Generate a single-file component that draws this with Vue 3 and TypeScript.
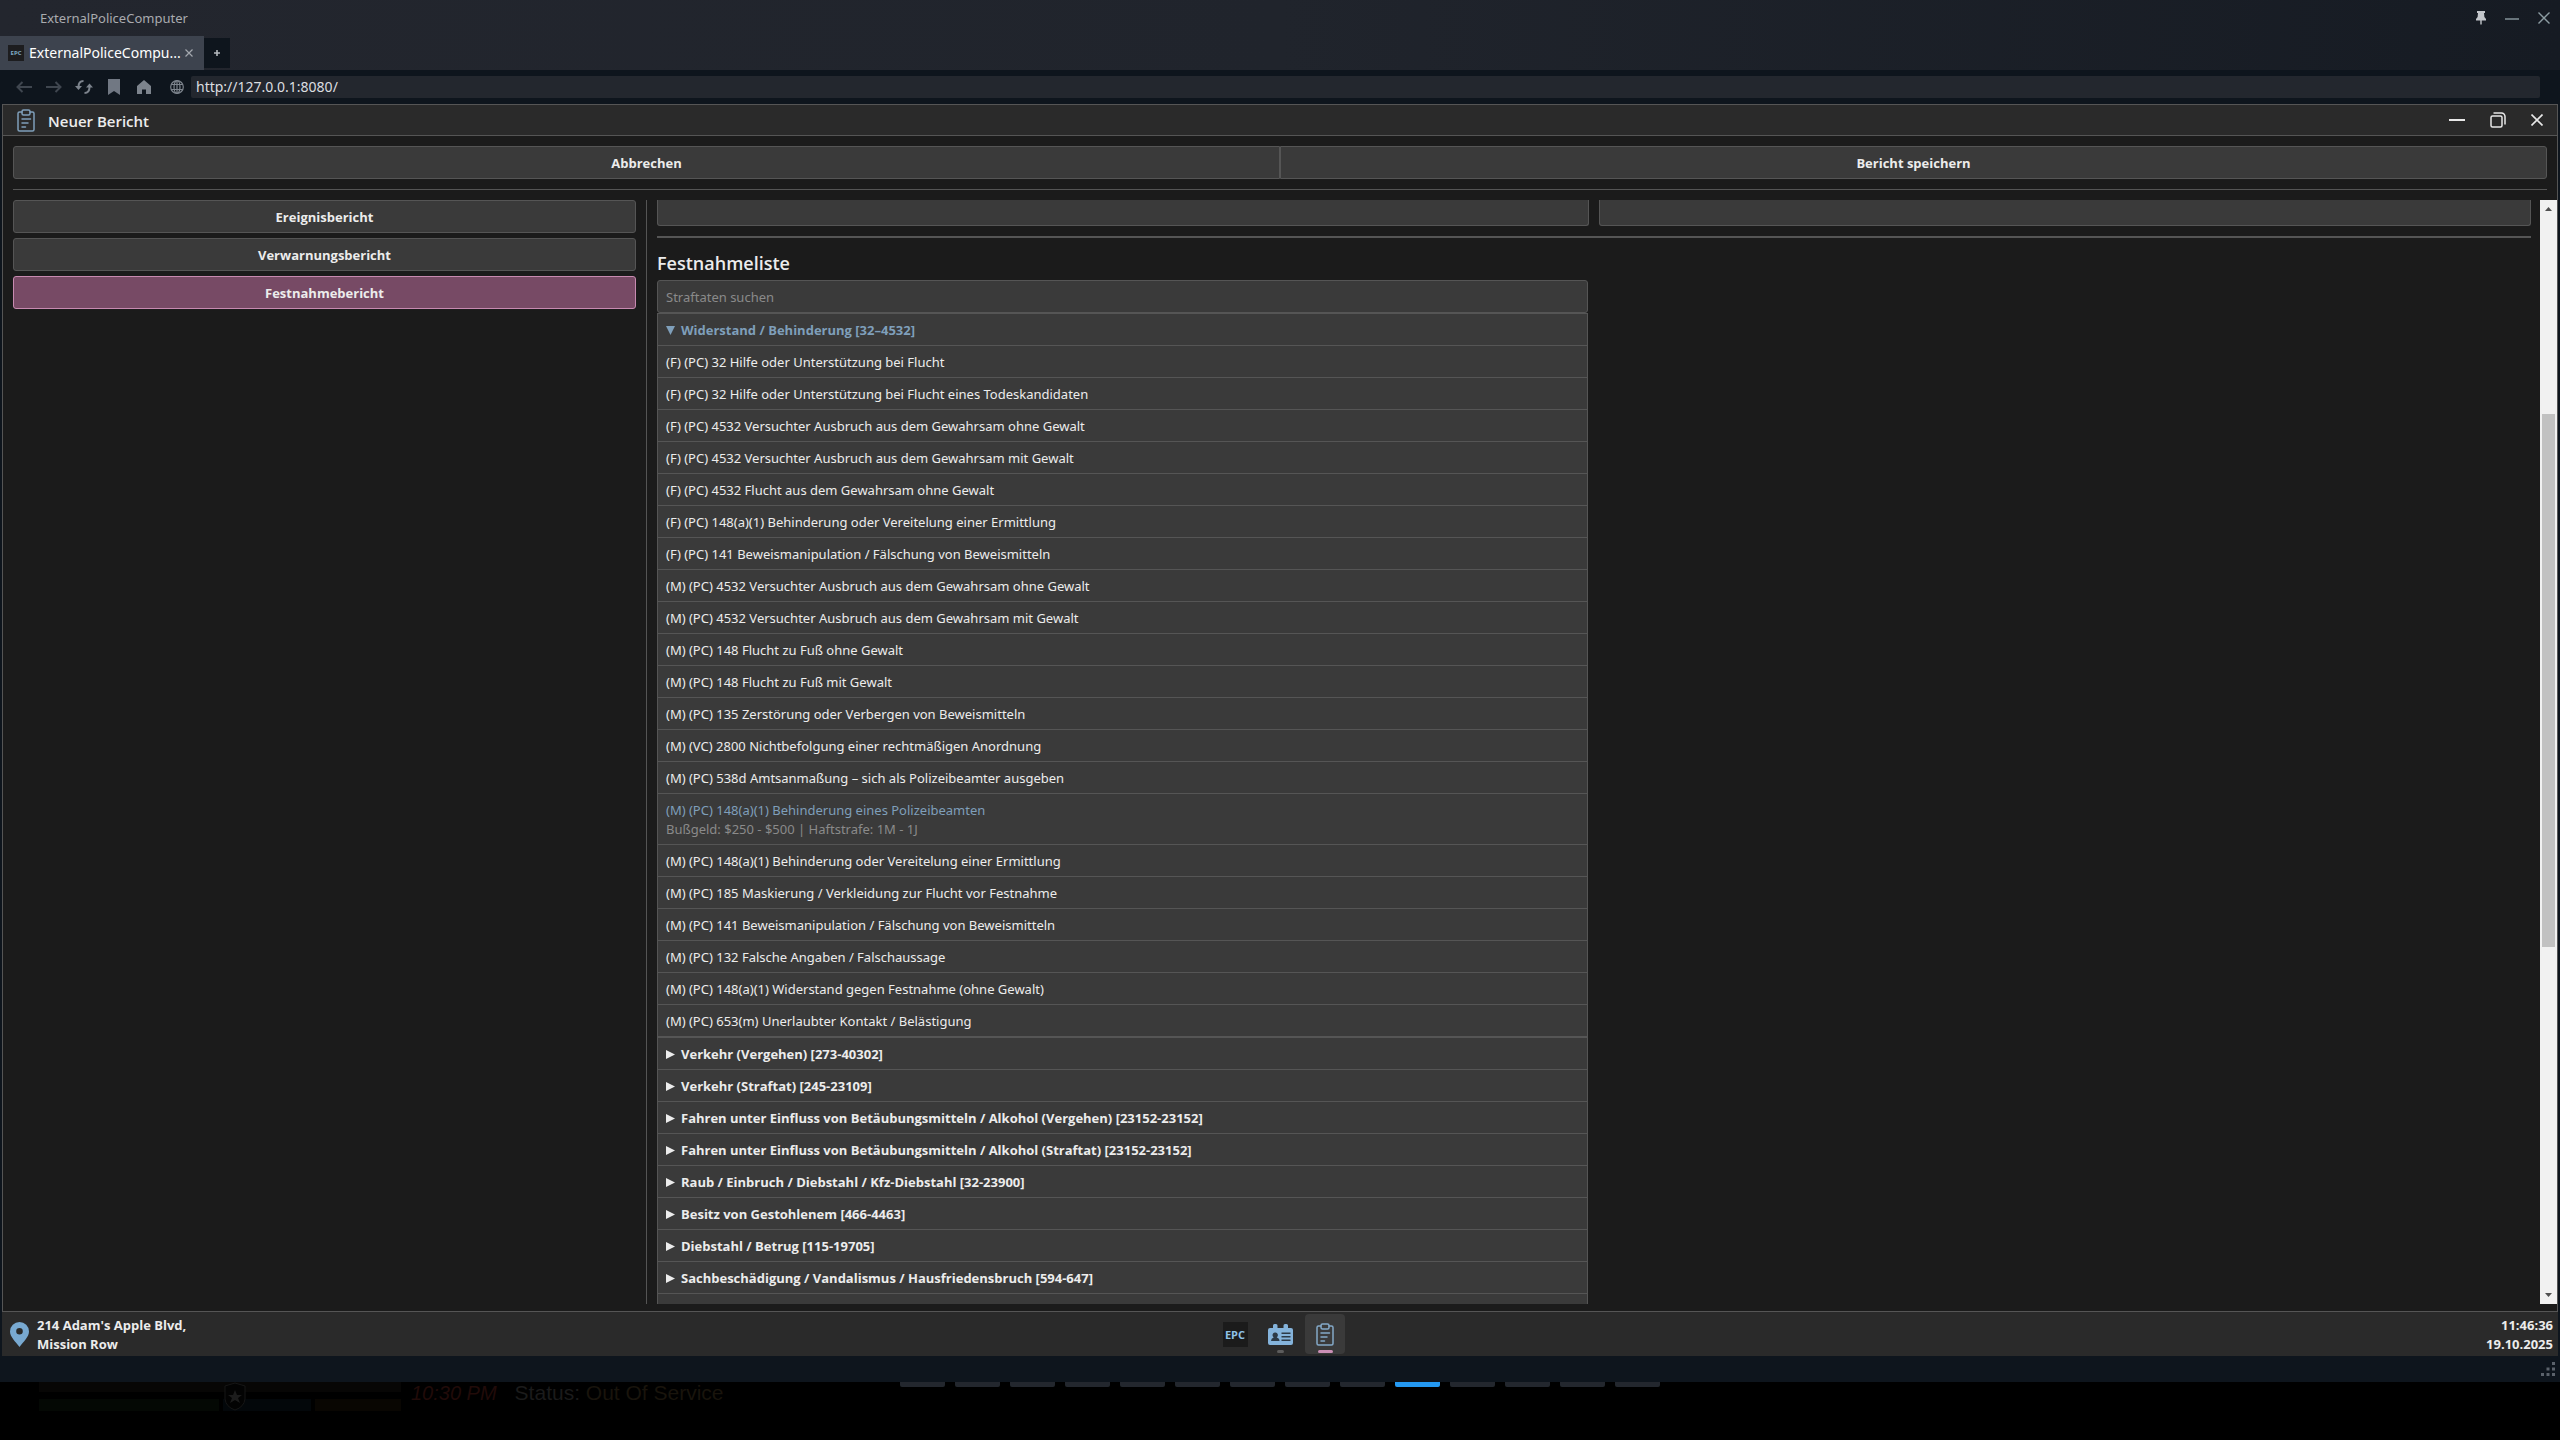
<script setup lang="ts">
import { ref } from 'vue'

interface Charge {
  text: string
  detail?: string
}
interface ChargeGroup {
  name: string
  charges: Charge[]
}

const address = ref('http://127.0.0.1:8080/')
const search = ref('')
const reportTypes = ['Ereignisbericht', 'Verwarnungsbericht', 'Festnahmebericht']
const activeType = ref('Festnahmebericht')

const resisting: Charge[] = [
  { text: '(F) (PC) 32 Hilfe oder Unterstützung bei Flucht' },
  { text: '(F) (PC) 32 Hilfe oder Unterstützung bei Flucht eines Todeskandidaten' },
  { text: '(F) (PC) 4532 Versuchter Ausbruch aus dem Gewahrsam ohne Gewalt' },
  { text: '(F) (PC) 4532 Versuchter Ausbruch aus dem Gewahrsam mit Gewalt' },
  { text: '(F) (PC) 4532 Flucht aus dem Gewahrsam ohne Gewalt' },
  { text: '(F) (PC) 148(a)(1) Behinderung oder Vereitelung einer Ermittlung' },
  { text: '(F) (PC) 141 Beweismanipulation / Fälschung von Beweismitteln' },
  { text: '(M) (PC) 4532 Versuchter Ausbruch aus dem Gewahrsam ohne Gewalt' },
  { text: '(M) (PC) 4532 Versuchter Ausbruch aus dem Gewahrsam mit Gewalt' },
  { text: '(M) (PC) 148 Flucht zu Fuß ohne Gewalt' },
  { text: '(M) (PC) 148 Flucht zu Fuß mit Gewalt' },
  { text: '(M) (PC) 135 Zerstörung oder Verbergen von Beweismitteln' },
  { text: '(M) (VC) 2800 Nichtbefolgung einer rechtmäßigen Anordnung' },
  { text: '(M) (PC) 538d Amtsanmaßung – sich als Polizeibeamter ausgeben' },
  {
    text: '(M) (PC) 148(a)(1) Behinderung eines Polizeibeamten',
    detail: 'Bußgeld: $250 - $500 | Haftstrafe: 1M - 1J',
  },
  { text: '(M) (PC) 148(a)(1) Behinderung oder Vereitelung einer Ermittlung' },
  { text: '(M) (PC) 185 Maskierung / Verkleidung zur Flucht vor Festnahme' },
  { text: '(M) (PC) 141 Beweismanipulation / Fälschung von Beweismitteln' },
  { text: '(M) (PC) 132 Falsche Angaben / Falschaussage' },
  { text: '(M) (PC) 148(a)(1) Widerstand gegen Festnahme (ohne Gewalt)' },
  { text: '(M) (PC) 653(m) Unerlaubter Kontakt / Belästigung' },
]

const groups: ChargeGroup[] = [
  { name: 'Widerstand / Behinderung [32–4532]', charges: resisting },
  { name: 'Verkehr (Vergehen) [273-40302]', charges: [] },
  { name: 'Verkehr (Straftat) [245-23109]', charges: [] },
  { name: 'Fahren unter Einfluss von Betäubungsmitteln / Alkohol (Vergehen) [23152-23152]', charges: [] },
  { name: 'Fahren unter Einfluss von Betäubungsmitteln / Alkohol (Straftat) [23152-23152]', charges: [] },
  { name: 'Raub / Einbruch / Diebstahl / Kfz-Diebstahl [32-23900]', charges: [] },
  { name: 'Besitz von Gestohlenem [466-4463]', charges: [] },
  { name: 'Diebstahl / Betrug [115-19705]', charges: [] },
  { name: 'Sachbeschädigung / Vandalismus / Hausfriedensbruch [594-647]', charges: [] },
  { name: '', charges: [] },
]

const segments = Array.from({ length: 14 }, (_, i) => i === 9)
</script>

<template>
  <div class="screen">
    <section class="overlay">
      <header class="titlebar">
        <span class="app-name">ExternalPoliceComputer</span>
        <div class="overlay-controls">
          <button aria-label="Anheften">
            <svg width="10" height="14" viewBox="0 0 10 14"><path d="M1 0h8v2H8l.4 4L10 8v1.500H5.700V13L5 14l-.7-1V9.500H0V8l1.600-2L2 2H1z" fill="#c3c6cb" /></svg>
          </button>
          <button aria-label="Minimieren">
            <svg width="14" height="14" viewBox="0 0 14 14"><path d="M0 8h14" stroke="#68747b" stroke-width="2" /></svg>
          </button>
          <button aria-label="Schließen">
            <svg width="12" height="12" viewBox="0 0 12 12"><path d="M.5.5l11 11M11.500.5l-11 11" stroke="#8c9ca2" stroke-width="1.400" /></svg>
          </button>
        </div>
      </header>
      <nav class="tabs">
        <div class="tab">
          <span class="favicon">EPC</span>
          <span class="tab-title">ExternalPoliceCompu...</span>
          <button aria-label="Tab schließen">
            <svg width="8" height="8" viewBox="0 0 8 8"><path d="M.5.5l7 7M7.500.5l-7 7" stroke="#a4a8ae" stroke-width="1.200" /></svg>
          </button>
        </div>
        <button class="new-tab" aria-label="Neuer Tab">
          <svg width="6" height="6" viewBox="0 0 6 6"><path d="M3 0v6M0 3h6" stroke="#b4b8bd" stroke-width="1.600" /></svg>
        </button>
      </nav>
      <div class="toolbar">
        <button aria-label="Zurück">
          <svg width="16" height="12" viewBox="0 0 16 12"><path d="M16 6H1.500M6.500 1l-5 5 5 5" fill="none" stroke="#3f464f" stroke-width="2" /></svg>
        </button>
        <button aria-label="Vorwärts">
          <svg width="16" height="12" viewBox="0 0 16 12"><path d="M0 6h14.500M9.500 1l5 5-5 5" fill="none" stroke="#3f464f" stroke-width="2" /></svg>
        </button>
        <button aria-label="Neu laden">
          <svg width="18" height="14" viewBox="0 0 18 14"><path d="M8.500 1C5.500 1 3.500 3 3.500 7M9.500 13c3 0 5-2 5-6" fill="none" stroke="#7d848d" stroke-width="2" /><path d="M0 6h7L3.500 10zM11 7.500h7L14.500 3.500z" fill="#7d848d" /></svg>
        </button>
        <button aria-label="Lesezeichen">
          <svg width="12" height="16" viewBox="0 0 12 16"><path d="M0 0h12v16l-6-4-6 4z" fill="#717883" /></svg>
        </button>
        <button aria-label="Startseite">
          <svg width="14" height="14" viewBox="0 0 14 14"><path d="M7 0l7 6v8H9V9.500H5V14H0V6z" fill="#7d848d" /></svg>
        </button>
        <svg class="globe" width="14" height="14" viewBox="0 0 14 14" fill="none" stroke="#7d848d" stroke-width="1.200"><circle cx="7" cy="7" r="6.300" /><ellipse cx="7" cy="7" rx="3" ry="6.300" /><path d="M7 .7v12.600M1.200 4.500h11.600M1.200 9.500h11.600" /></svg>
        <input v-model="address" class="address" aria-label="Adresse" />
      </div>

      <main class="page">
        <section class="window">
          <header class="window-head">
            <svg width="18" height="23" viewBox="0 0 18 23" fill="none" stroke="#7f9fba" stroke-width="1.500" stroke-linecap="round"><path d="M5 3H2.500A1.500 1.500 0 0 0 1 4.500v16A1.500 1.500 0 0 0 2.500 22h13a1.500 1.500 0 0 0 1.500-1.500v-16A1.500 1.500 0 0 0 15.500 3H13" /><path d="M5 2.500Q5 1 6.500 1h5Q13 1 13 2.500v2Q13 6 11.500 6h-5Q5 6 5 4.500zM5 10h8.500M5 14h6M5 18h3.500" /></svg>
            <h1>Neuer Bericht</h1>
            <div class="window-controls">
              <button aria-label="Fenster minimieren">
                <svg width="16" height="16" viewBox="0 0 16 16"><path d="M0 8h16" stroke="#e8e8e8" stroke-width="2" /></svg>
              </button>
              <button aria-label="Fenster wiederherstellen">
                <svg width="16" height="16" viewBox="0 0 16 16" fill="none" stroke="#e8e8e8" stroke-width="1.500"><rect x="1" y="4" width="11" height="11" rx="1.500" /><path d="M3.500 1H11.500A3.500 3.500 0 0 1 15 4.500V12.500" /></svg>
              </button>
              <button aria-label="Fenster schließen">
                <svg width="12" height="12" viewBox="0 0 12 12"><path d="M.5.5l11 11M11.500.5l-11 11" stroke="#e8e8e8" stroke-width="1.600" /></svg>
              </button>
            </div>
          </header>

          <div class="actions">
            <button class="btn cancel">Abbrechen</button>
            <button class="btn save">Bericht speichern</button>
          </div>

          <div class="body">
            <aside class="types">
              <button
                v-for="type in reportTypes"
                :key="type"
                class="btn"
                :class="{ active: type === activeType }"
                @click="activeType = type"
              >{{ type }}</button>
            </aside>
            <div class="form">
              <div class="notes">
                <textarea aria-label="Feld links"></textarea>
                <textarea aria-label="Feld rechts"></textarea>
              </div>
              <hr />
              <h2>Festnahmeliste</h2>
              <div class="list">
                <input v-model="search" class="search" placeholder="Straftaten suchen" aria-label="Straftaten suchen" />
                <details v-for="(group, i) in groups" :key="i" :open="group.charges.length > 0">
                  <summary>
                    <svg class="marker" width="9" height="9" viewBox="0 0 9 9"><path d="M0 0l9 4.500L0 9z" fill="currentColor" /></svg>
                    {{ group.name }}
                  </summary>
                  <button
                    v-for="charge in group.charges"
                    :key="charge.text"
                    class="charge"
                    :class="{ hovered: charge.detail }"
                  >
                    <span>{{ charge.text }}</span>
                    <small v-if="charge.detail">{{ charge.detail }}</small>
                  </button>
                </details>
              </div>
            </div>
            <div class="scrollbar">
              <svg width="7" height="4" viewBox="0 0 7 4"><path d="M0 4l3.500-4L7 4z" fill="#505050" /></svg>
              <div class="track"><div class="thumb"></div></div>
              <svg width="7" height="4" viewBox="0 0 7 4"><path d="M0 0l3.500 4L7 0z" fill="#505050" /></svg>
            </div>
          </div>
        </section>

        <footer class="taskbar">
          <div class="place">
            <svg width="19" height="25" viewBox="0 0 19 25"><path fill-rule="evenodd" d="M9.500 0A9.500 9.500 0 0 1 19 9.500C19 15 13.500 19.500 9.500 25 5.500 19.500 0 15 0 9.500A9.500 9.500 0 0 1 9.500 0zm0 6a3.300 3.300 0 1 0 0 6.600 3.300 3.300 0 0 0 0-6.600z" fill="#78a9d1" /></svg>
            <p>214 Adam's Apple Blvd,<br />Mission Row</p>
          </div>
          <div class="apps">
            <button class="app" aria-label="EPC"><span class="epc">EPC</span></button>
            <button class="app" aria-label="Personen">
              <svg width="25" height="21" viewBox="0 0 25 21"><path d="M2 4h3V1.500Q5 0 6.500 0H8Q9.500 0 9.500 1.500V4h6V1.500Q15.500 0 17 0h1.500Q20 0 20 1.500V4h3q2 0 2 2v13q0 2-2 2H2q-2 0-2-2V6q0-2 2-2z" fill="#84b3db" /><path d="M7.200 8.500a2.500 2.700 0 0 1 1.500 5q2.800.8 2.800 3.500H3q0-2.700 2.700-3.500a2.500 2.700 0 0 1 1.500-5zM13.500 8.500h9V10h-9zM13.500 12h9v1.500h-9zM13.500 15.500h9V17h-9z" fill="#2c3a47" /></svg>
              <i class="dot"></i>
            </button>
            <button class="app current" aria-label="Bericht">
              <svg width="18" height="23" viewBox="0 0 18 23" fill="none" stroke="#84a9c8" stroke-width="1.500" stroke-linecap="round"><path d="M5 3H2.500A1.500 1.500 0 0 0 1 4.500v16A1.500 1.500 0 0 0 2.500 22h13a1.500 1.500 0 0 0 1.500-1.500v-16A1.500 1.500 0 0 0 15.500 3H13" /><path d="M5 2.500Q5 1 6.500 1h5Q13 1 13 2.500v2Q13 6 11.500 6h-5Q5 6 5 4.500zM5 10h8.500M5 14h6M5 18h3.500" /></svg>
              <i class="dot"></i>
            </button>
          </div>
          <p class="clock">11:46:36<br />19.10.2025</p>
        </footer>
      </main>

      <div class="grip">
        <svg width="14" height="14" viewBox="0 0 14 14" fill="#5b626b"><path d="M11 0h3v3h-3zM5.500 5.500h3v3h-3zM11 5.500h3v3h-3zM0 11h3v3H0zM5.500 11h3v3h-3zM11 11h3v3h-3z" /></svg>
      </div>
    </section>

    <div class="game">
      <svg class="bars" width="362" height="32" viewBox="0 0 362 32"><path d="M0 0h362v10H0z" fill="#070605" /><path d="M0 17h180v12H0z" fill="#040804" /><path d="M184 17h88v12h-88z" fill="#03070a" /><path d="M276 17h86v12h-86z" fill="#090602" /><path d="M196 1l10 3v13q-1 8-10 11-9-3-10-11V4z" fill="#030303" stroke="#161616" /><path d="M196 8l2 5h5l-4 3 2 5-5-3-5 3 2-5-4-3h5z" fill="#1c1c1c" /></svg>
      <span class="game-time">10:30 PM</span>
      <span class="game-status">Status: <em>Out Of Service</em></span>
      <div class="segments">
        <i v-for="(on, i) in segments" :key="i" :class="{ on }"></i>
      </div>
    </div>
  </div>
</template>

<style>
html,
body {
  margin: 0;
  background: #000;
}
</style>

<style scoped>
* {
  box-sizing: border-box;
}
.screen {
  height: 100vh;
  display: flex;
  flex-direction: column;
  overflow: hidden;
  background: #000;
  color: #ececec;
  font: 14px/19px 'Open Sans', 'Noto Sans', sans-serif;
}
button {
  padding: 0;
  border: 0;
  background: none;
  color: inherit;
  font: inherit;
}
input,
textarea {
  font: inherit;
  outline: 0;
}
svg {
  display: block;
  flex: none;
}
h1,
h2,
p {
  margin: 0;
}
.overlay {
  flex: 1;
  min-height: 0;
  display: flex;
  flex-direction: column;
  background: linear-gradient(90deg, #23262e, #20242c 50%, #161b23) 0 0 / 100% 70px no-repeat, #0e151d;
}
.titlebar {
  height: 36px;
  flex: none;
  display: flex;
  align-items: center;
  justify-content: space-between;
  padding: 0 10px 0 40px;
}
.app-name {
  color: #a9abaf;
  font: 13px/18px 'Noto Sans', sans-serif;
}
.overlay-controls {
  display: flex;
  align-items: center;
  gap: 19px;
}
.tabs {
  height: 34px;
  flex: none;
  display: flex;
  align-items: center;
}
.tab {
  width: 204px;
  height: 34px;
  padding: 0 11px 0 8px;
  display: flex;
  align-items: center;
  background: #3d434e;
}
.favicon {
  width: 16px;
  height: 16px;
  background: #1d1d1f;
  color: #7fa9c4;
  font: bold 6px/16px 'Open Sans', sans-serif;
  text-align: center;
}
.tab-title {
  flex: 1;
  margin-left: 5px;
  padding-bottom: 2px;
  color: #fff;
  font: 14px/19px 'Noto Sans', sans-serif;
  white-space: nowrap;
}
.new-tab {
  width: 26px;
  height: 30px;
  display: flex;
  align-items: center;
  justify-content: center;
  background: #0e151d;
}
.toolbar {
  height: 34px;
  flex: none;
  display: flex;
  align-items: center;
  padding: 0 20px 0 9px;
}
.toolbar button {
  width: 30px;
  display: flex;
  justify-content: center;
}
.globe {
  margin: 0 7px 0 11px;
}
.address {
  flex: 1;
  height: 22px;
  padding: 0 5px 2px;
  border: 0;
  border-radius: 2px;
  background: #23272e;
  color: #dcdee0;
  font: 14px/20px 'Noto Sans', sans-serif;
}
.page {
  flex: 1;
  min-height: 0;
  display: flex;
  flex-direction: column;
  padding: 0 2px;
}
.window {
  flex: 1;
  min-height: 0;
  display: flex;
  flex-direction: column;
  border: 1px solid #555;
  background: #1b1b1b;
}
.window-head {
  height: 31px;
  flex: none;
  display: flex;
  align-items: center;
  gap: 13px;
  padding: 0 14px;
  border-bottom: 1px solid #555;
  background: #2a2a2a;
}
h1 {
  flex: 1;
  padding-top: 1px;
  font-size: 15px;
  font-weight: 600;
  line-height: 20px;
}
.window-controls {
  display: flex;
  align-items: center;
  gap: 25px;
}
.actions {
  flex: none;
  display: flex;
  margin: 0 10px;
  padding: 10px 0;
  border-bottom: 1px solid #555;
}
.btn {
  height: 33px;
  padding-top: 1px;
  border: 1px solid #555;
  border-radius: 3px;
  background: #3a3a3a;
  font-size: 13px;
  font-weight: 700;
}
.cancel {
  flex: 1;
  border-radius: 3px 0 0 3px;
}
.save {
  flex: 1;
  border-radius: 0 3px 3px 0;
}
.body {
  flex: 1;
  min-height: 0;
  display: flex;
  margin: 10px 0 7px 10px;
}
.types {
  width: calc(25% - 13px);
  display: flex;
  flex-direction: column;
  gap: 5px;
}
.btn.active {
  border-color: #c78ab0;
  background: #774a65;
}
.form {
  flex: 1;
  min-width: 0;
  overflow: hidden;
  margin-left: 10px;
  padding: 0 9px 0 10px;
  border-left: 1px solid #555;
}
.notes {
  display: grid;
  grid-template-columns: 1fr 1fr;
  gap: 10px;
}
textarea {
  display: block;
  width: 100%;
  height: 26px;
  border: 1px solid #555;
  border-top: 0;
  border-radius: 0 0 3px 3px;
  background: #3a3a3a;
  color: inherit;
  resize: none;
}
hr {
  height: 2px;
  margin: 10px 0 13px;
  border: 0;
  background: #555;
}
h2 {
  margin-bottom: 5px;
  font-size: 18px;
  font-weight: 600;
  line-height: 24px;
}
.list {
  width: calc(50% - 6px);
}
.search {
  display: block;
  width: 100%;
  height: 33px;
  padding: 0 8px;
  border: 1px solid #555;
  border-radius: 3px;
  background: #3a3a3a;
  color: #ececec;
  font: 13px/19px 'Noto Sans', sans-serif;
}
.search::placeholder {
  color: #8a8a8a;
  opacity: 1;
}
details {
  border: 1px solid #555;
  border-bottom: 0;
  background: #3a3a3a;
}
details[open] {
  border-bottom: 1px solid #555;
}
summary {
  display: flex;
  align-items: center;
  gap: 6px;
  height: 31px;
  padding: 1px 8px 0;
  font-size: 13px;
  font-weight: 700;
  list-style: none;
}
details[open] > summary {
  color: #7f9fba;
}
details[open] .marker {
  transform: rotate(90deg);
}
.charge {
  display: flex;
  flex-direction: column;
  width: 100%;
  padding: 7px 8px 5px;
  border-top: 1px solid #555;
  font: 13px/19px 'Noto Sans', sans-serif;
  text-align: left;
}
.charge small {
  color: #8a8a8a;
  font-size: 13px;
}
.hovered span {
  color: #7f9fba;
}
.scrollbar {
  width: 17px;
  display: flex;
  flex-direction: column;
  align-items: center;
  padding: 7px 2px;
  background: #f1f1f1;
}
.track {
  flex: 1;
  width: 100%;
  padding: 203px 0 0;
}
.thumb {
  height: calc(60% + 6px);
  background: #c1c1c1;
}
.taskbar {
  height: 44px;
  flex: none;
  display: grid;
  grid-template-columns: 1fr auto 1fr;
  align-items: center;
  padding: 0 5px;
  background: #2a2a2a;
  font-size: 13px;
  font-weight: 700;
}
.taskbar p {
  padding-top: 1px;
}
.place {
  display: flex;
  align-items: center;
  gap: 8px;
  padding-left: 3px;
}
.apps {
  display: flex;
  gap: 5px;
}
.app {
  position: relative;
  width: 40px;
  height: 40px;
  display: flex;
  align-items: center;
  justify-content: center;
  border-radius: 4px;
}
.app.current {
  background: #3a3a3a;
}
.epc {
  width: 25px;
  height: 25px;
  background: #1b1b1b;
  color: #8fc1e6;
  font-size: 11px;
  line-height: 25px;
}
.dot {
  position: absolute;
  bottom: 1px;
  left: 50%;
  width: 7px;
  height: 3px;
  margin-left: -3px;
  border-radius: 2px;
  background: #5c5c5c;
}
.current .dot {
  width: 15px;
  margin-left: -7px;
  background: #cb8fb5;
}
.clock {
  text-align: right;
}
.grip {
  height: 26px;
  flex: none;
  display: flex;
  align-items: center;
  justify-content: flex-end;
  padding-right: 5px;
}
.game {
  position: relative;
  height: 58px;
  flex: none;
  display: flex;
  align-items: flex-start;
  padding-left: 39px;
}
.game-time {
  margin-left: 10px;
  color: #210b09;
  font: italic 20px/22px 'Liberation Sans', sans-serif;
}
.game-status {
  margin-left: 18px;
  color: #1b1b1b;
  font: 21px/22px 'Liberation Sans Narrow', 'Liberation Sans', sans-serif;
  white-space: nowrap;
}
.game-status em {
  color: #19140c;
  font-style: normal;
}
.segments {
  position: absolute;
  top: 0;
  left: 0;
  right: 0;
  display: flex;
  justify-content: center;
  gap: 10px;
}
.segments i {
  width: 45px;
  height: 5px;
  border-radius: 0 0 2px 2px;
  background: #23272e;
}
.segments .on {
  background: #2499f2;
}
</style>
